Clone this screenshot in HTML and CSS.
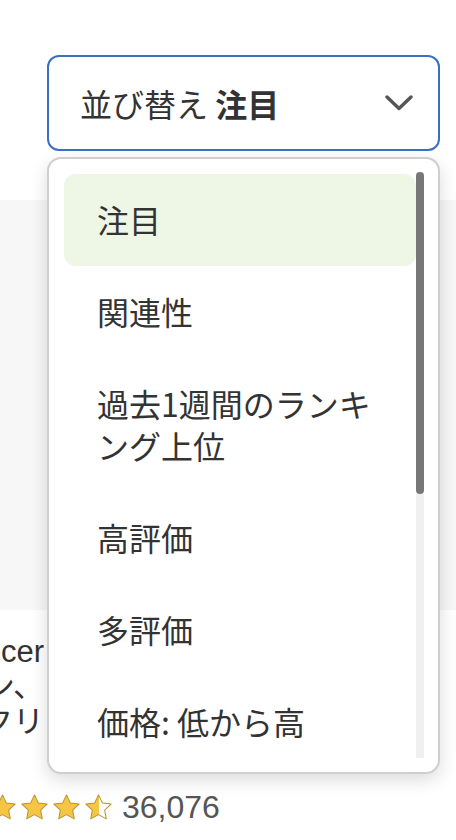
FILE: index.html
```html
<!DOCTYPE html>
<html lang="ja">
<head>
    <meta charset="UTF-8">
    <meta name="viewport" content="width=device-width, initial-scale=1.0">
    <title>並び替え</title>
    <link rel="stylesheet" href="styles.css">
</head>

<body>

<svg width="0" height="0" class="defs">
  <defs>
    <linearGradient id="half-fill" x1="0" x2="1" y1="0" y2="0">
      <stop offset="50%" stop-color="#f5c544"/>
      <stop offset="50%" stop-color="#fff"/>
    </linearGradient>
  </defs>
</svg>

<div class="toolbar">
  <div class="sort-select">
    <span class="sort-label">並び替え <b>注目</b></span>
    <svg class="chevron" width="28" height="16" viewBox="0 0 28 16">
      <path d="M2 2 L14 13.5 L26 2" fill="none" stroke="#555" stroke-width="3.4" stroke-linecap="round" stroke-linejoin="round"/>
    </svg>
  </div>

  <div class="sort-menu">
    <ul class="sort-list">
      <li class="sort-item active">注目</li>
      <li class="sort-item">関連性</li>
      <li class="sort-item">過去1週間のランキング上位</li>
      <li class="sort-item">高評価</li>
      <li class="sort-item">多評価</li>
      <li class="sort-item">価格: 低から高</li>
      <li class="sort-item">価格: 高から低</li>
      <li class="sort-item">新着</li>
      <li class="sort-item">販売数</li>
      <li class="sort-item">割引率</li>
    </ul>
    <div class="scroll-track">
      <div class="scroll-thumb"></div>
    </div>
  </div>
</div>

<div class="results">
  <div class="product-card">
    <div class="product-image"></div>
    <div class="product-title">
      <span>Baby Bouncer</span>
      <span>ーション、</span>
      <span>ビックリ</span>
    </div>
    <div class="product-rating">
      <svg class="star" viewBox="0 0 24 24"><path d="M12 0.8l3.4 7.1 7.8 1-5.7 5.4 1.4 7.8L12 18.3l-6.9 3.8 1.4-7.8L0.8 8.9l7.8-1z" fill="#f5c544"/></svg>
      <svg class="star" viewBox="0 0 24 24"><path d="M12 0.8l3.4 7.1 7.8 1-5.7 5.4 1.4 7.8L12 18.3l-6.9 3.8 1.4-7.8L0.8 8.9l7.8-1z" fill="#f5c544"/></svg>
      <svg class="star" viewBox="0 0 24 24"><path d="M12 0.8l3.4 7.1 7.8 1-5.7 5.4 1.4 7.8L12 18.3l-6.9 3.8 1.4-7.8L0.8 8.9l7.8-1z" fill="#f5c544"/></svg>
      <svg class="star" viewBox="0 0 24 24"><path d="M12 0.8l3.4 7.1 7.8 1-5.7 5.4 1.4 7.8L12 18.3l-6.9 3.8 1.4-7.8L0.8 8.9l7.8-1z" fill="#f5c544"/></svg>
      <svg class="star" viewBox="0 0 24 24"><path d="M12 0.8l3.4 7.1 7.8 1-5.7 5.4 1.4 7.8L12 18.3l-6.9 3.8 1.4-7.8L0.8 8.9l7.8-1z" fill="url(#half-fill)"/></svg>
      <span class="rating-count">36,076</span>
    </div>
  </div>
</div>

</body>
</html>
```

FILE: styles.css
```css
html, body {
    margin: 0;
    padding: 0;
    background-color: #fff;
    overflow-x: hidden;
}

body {
    font-family: "Liberation Sans", "Noto Sans CJK JP", sans-serif;
    color: #333;
}

.defs {
    position: absolute;
}

.toolbar {
    position: relative;
    padding: 55px 16px 0 47px;
    z-index: 2;
}

.sort-select {
    box-sizing: border-box;
    height: 96px;
    border: 2px solid #3b6fc4;
    border-radius: 12px;
    background-color: #fff;
    padding: 0 25px 0 31px;
    display: flex;
    align-items: center;
    justify-content: space-between;
}

.sort-label {
    font-family: "Noto Sans CJK JP", sans-serif;
    font-size: 32px;
    color: #333;
}

.sort-label b {
    font-weight: 700;
}

.chevron {
    display: block;
}

.sort-menu {
    position: absolute;
    left: 47px;
    right: 16px;
    top: calc(100% + 6px);
    box-sizing: border-box;
    height: 617px;
    background-color: #fff;
    border: 2px solid #cfcfcf;
    border-radius: 14px;
    padding: 15px 14px 14px 15px;
    box-shadow: 0 6px 18px rgba(0, 0, 0, 0.14);
    display: flex;
}

.sort-list {
    flex: 1;
    list-style: none;
    margin: 0;
    padding: 0;
    overflow: hidden;
}

.scroll-track {
    width: 8px;
    margin-top: -2px;
    background-color: #f0f0f0;
}

.scroll-thumb {
    height: 322px;
    background-color: #777;
    border-radius: 4px;
}

.sort-item {
    font-family: "Noto Sans CJK JP", sans-serif;
    font-size: 32px;
    line-height: 42px;
    padding: 24px 30px 26px 33px;
    border-radius: 12px;
    color: #333;
}

.sort-item.active {
    background-color: #eef6e5;
}

.results {
    margin-top: 49px;
}

.product-card {
    margin-left: -43px;
    width: 520px;
}

.product-image {
    height: 410px;
    background-color: #f7f7f7;
}

.product-title {
    margin-top: 24px;
    margin-left: -200px;
    width: 287px;
    font-size: 31px;
    line-height: 35px;
    text-align: right;
    color: #333;
}

.product-title span {
    display: block;
    white-space: nowrap;
}

.product-rating {
    margin-top: 50px;
    display: flex;
    align-items: center;
    gap: 5px;
}

.star {
    width: 27px;
    height: 27px;
    display: block;
}

.star path {
    stroke: #b8922c;
    stroke-width: 0.9;
    stroke-linejoin: round;
}

.rating-count {
    margin-left: 5px;
    font-size: 32px;
    color: #555;
}
```
